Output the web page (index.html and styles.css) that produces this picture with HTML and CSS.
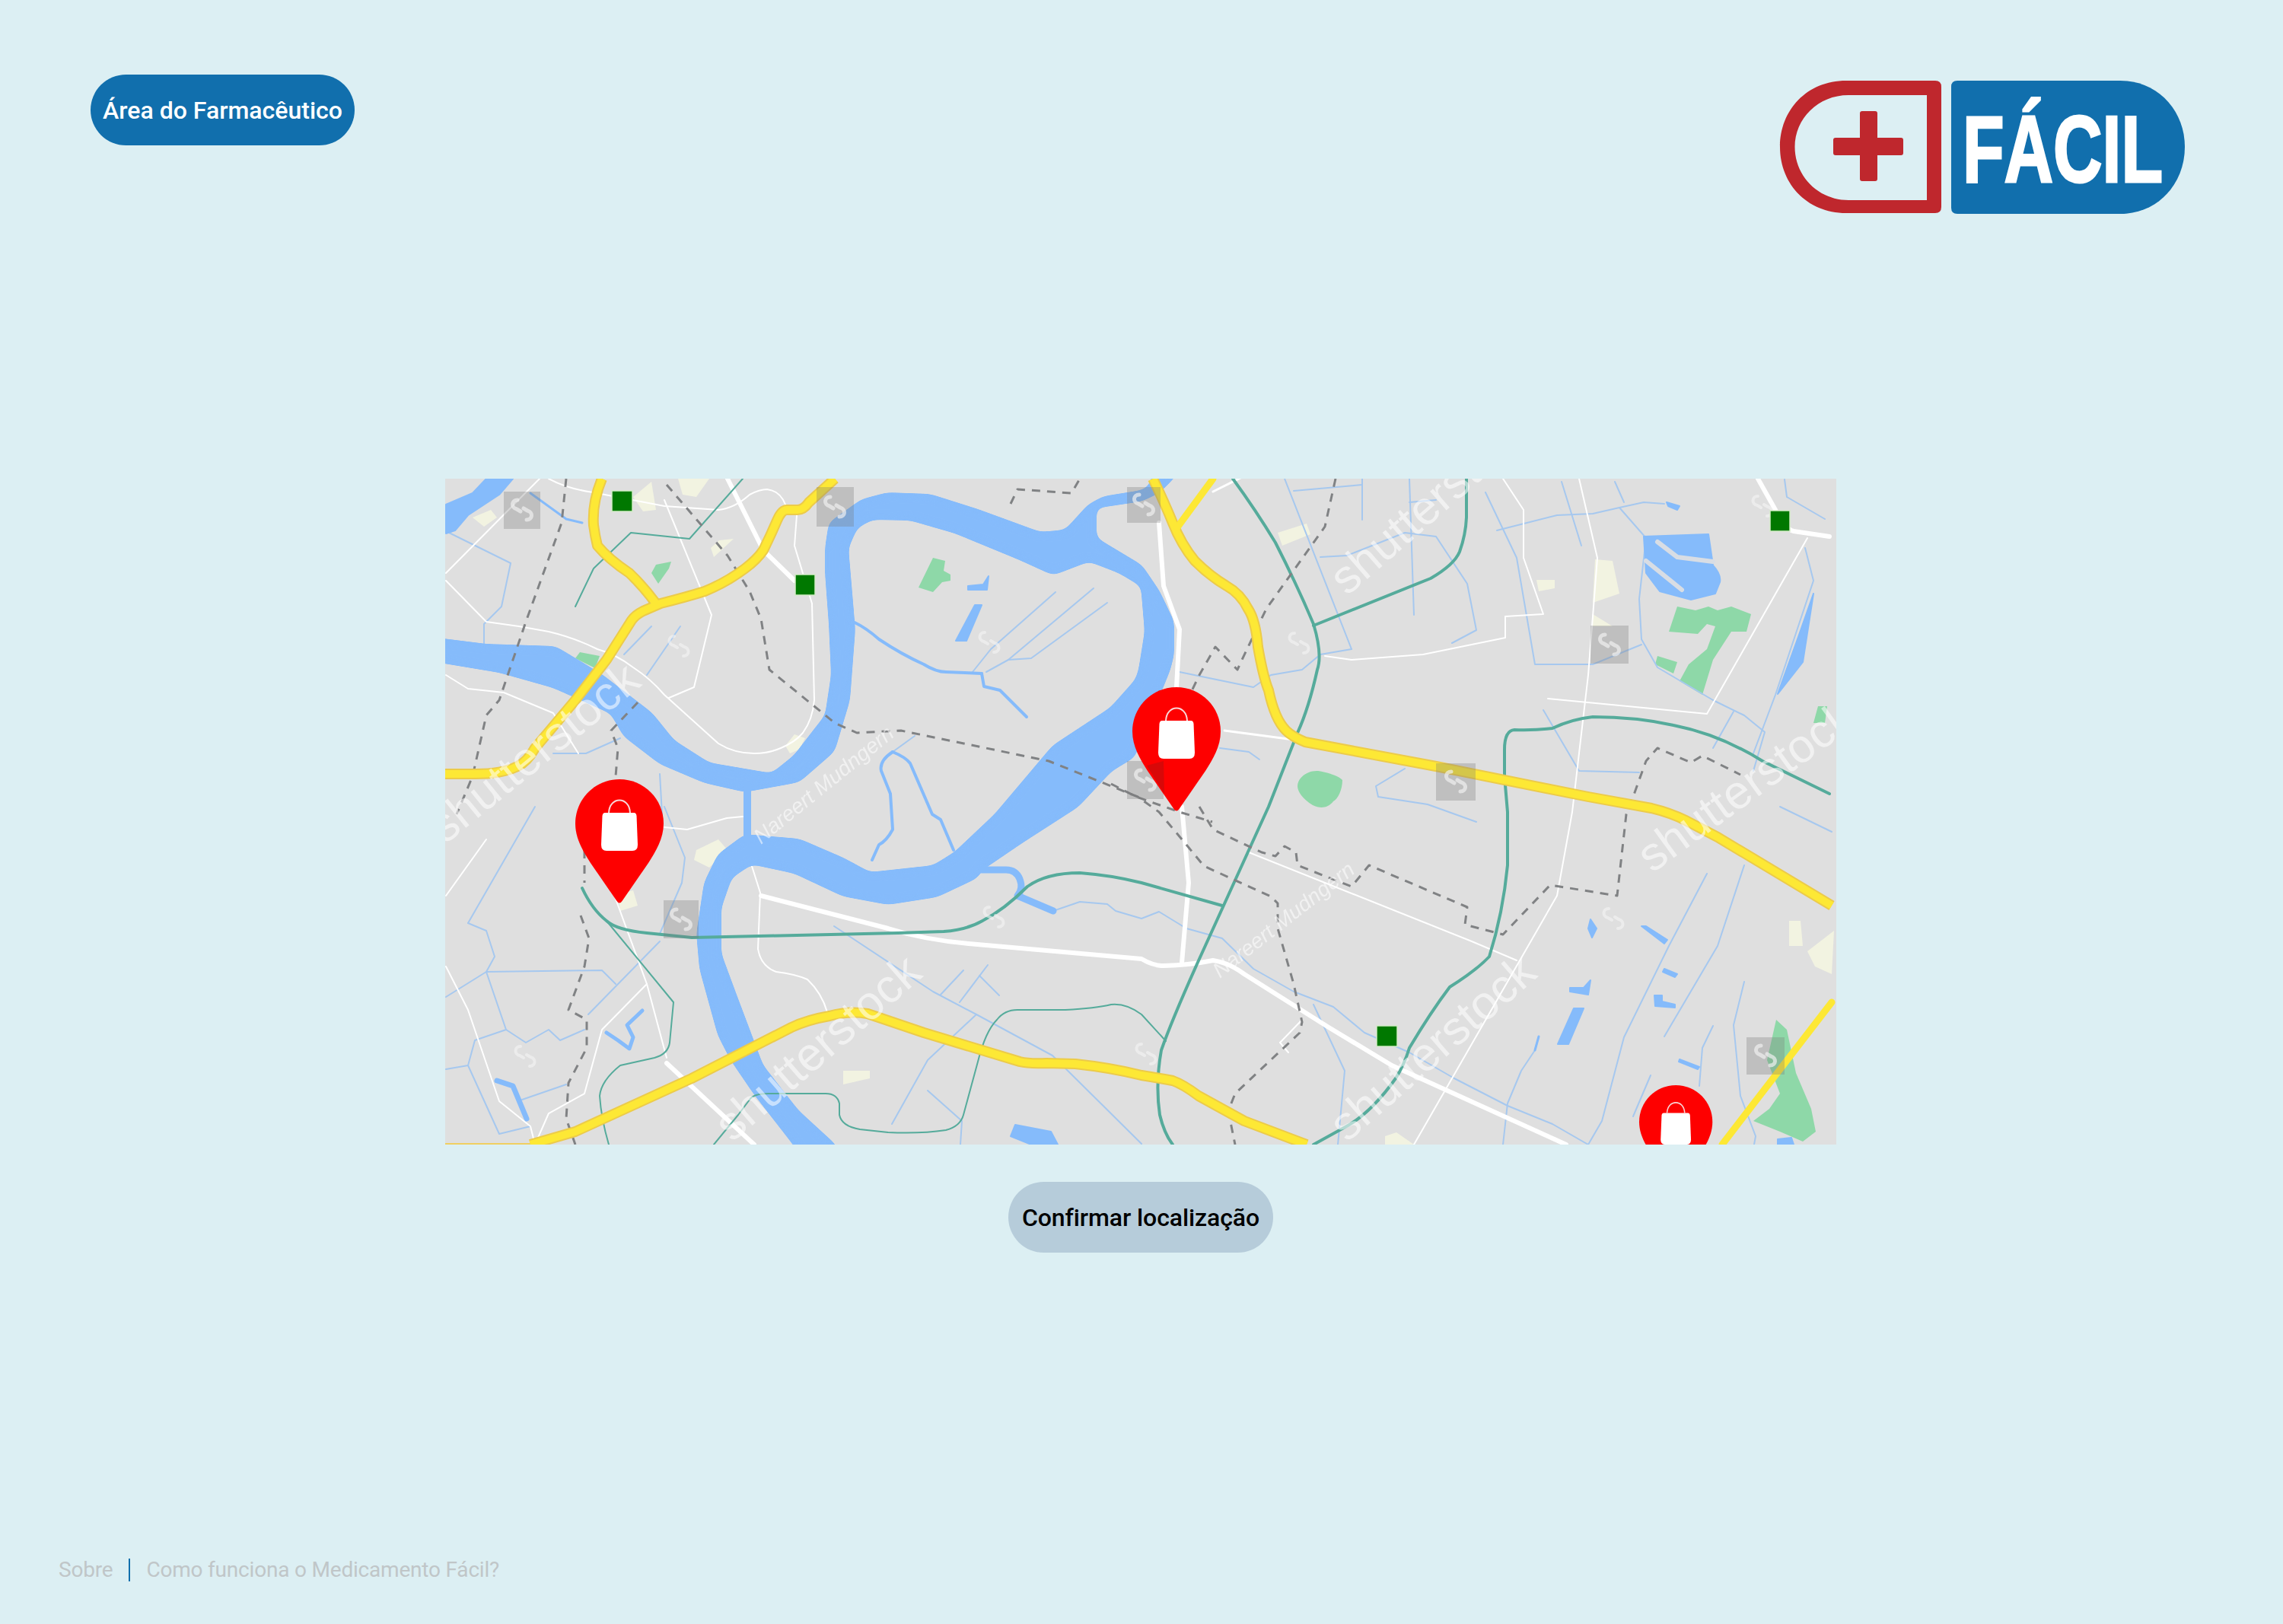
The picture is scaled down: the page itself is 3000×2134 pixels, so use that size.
FILE: index.html
```html
<!DOCTYPE html>
<html lang="pt-BR">
<head>
<meta charset="utf-8">
<title>Medicamento Fácil</title>
<link rel="stylesheet" href="styles.css">
</head>
<body>
<div class="page">
  <header class="header">
    <a class="pill pill-primary" href="#">Área do Farmacêutico</a>
    <svg class="logo" viewBox="0 0 532 175" aria-label="+ Fácil">
      <path class="logo-red" fill-rule="evenodd" d="M87 0H204Q212 0 212 8V166Q212 174 204 174H87C35 174 0 135 0 87C0 39 35 0 87 0ZM193 19V157H90C50 157 19.5 125 19.5 87C19.5 50 50 19 90 19Z"/>
      <path class="logo-red" d="M105 43Q105 40 108 40H125Q128 40 128 43V75H159Q162 75 162 78V95Q162 98 159 98H128V129Q128 132 125 132H108Q105 132 105 129V98H73Q70 98 70 95V78Q70 75 73 75H105Z"/>
      <path class="logo-blue" d="M233 0H447C497 0 532 40 532 87C532 135 497 175 447 175H233Q225 175 225 167V8Q225 0 233 0Z"/>
      <text class="logo-text" x="240" y="133" textLength="263" lengthAdjust="spacingAndGlyphs">FÁCIL</text>
    </svg>
  </header>

  <main class="main">
    <svg class="map" viewBox="585 629 1828 875" role="img" aria-label="Mapa com farmácias">
      <defs>
        <filter id="soft" x="-5%" y="-5%" width="110%" height="110%" color-interpolation-filters="sRGB">
          <feGaussianBlur stdDeviation="6"/>
          <feColorMatrix values="1 0 0 0 0 0 1 0 0 0 0 0 1 0 0 0 0 0 20 -9.500"/>
        </filter>
        <path id="ws" d="M-6 -13C-14 -13 -15 -3 -7 -1M6 13C14 13 15 3 7 1M-7 -1L-2 2M7 1L2 -2"/>
        <g id="pin">
          <path class="pin-red" d="M58 0C90 0 116 26 116 58C116 78 106 94 96 110L61.500 160Q58 165 54.500 160L20 110C10 94 0 78 0 58C0 26 26 0 58 0Z"/>
          <path class="pin-bag" d="M39 44H77Q80 44 80.500 48L82 86Q82 94 75 94H41Q34 94 34 86L35.500 48Q36 44 39 44Z"/>
          <path class="pin-handle" d="M44 44C45 22 71 22 72 44"/>
        </g>
        <g id="roads">
          <path d="M585 1017H625Q660 1017 680 1007Q693 1001 703 983L756 920L797 867L830 815Q835 808 845 803L868 793Q900 785 926 777Q955 765 979 747Q995 735 1003 723Q1012 705 1021 684Q1027 670 1034 670H1048Q1056 670 1063 660L1097 629"/>
          <path d="M791 629Q778 660 780 690Q782 705 785 717Q800 735 827 753Q845 770 862 793"/>
          <path d="M1515 629Q1530 660 1541 687Q1552 715 1570 737Q1590 757 1612 770Q1630 780 1640 800Q1650 815 1653 850Q1660 890 1667 907Q1675 945 1690 960Q1698 968 1715 975L1887 1007L2087 1047L2170 1062Q2195 1068 2215 1078L2257 1100L2407 1190"/>
          <path d="M697 1504L756 1487L909 1417L1040 1350Q1061 1340 1090 1335Q1115 1328 1140 1332L1214 1357L1340 1395Q1352 1398 1375 1397L1413 1398Q1460 1403 1500 1413Q1525 1417 1541 1420Q1555 1425 1575 1440L1635 1473L1717 1504"/>
        </g>
      </defs>

      <rect class="land" x="585" y="629" width="1828" height="875"/>

      <g class="cream">
        <polygon points="832,653 856,633 862,670 845,672"/>
        <polygon points="891,629 932,629 915,653 897,650"/>
        <polygon points="621,680 645,670 653,680 636,692"/>
        <polygon points="964,708 938,732 934,720 945,710"/>
        <polygon points="1044,965 1058,970 1050,985 1038,990 1032,980"/>
        <polygon points="915,1117 944,1103 956,1117 932,1140 912,1130"/>
        <polygon points="832,1170 838,1190 815,1197 812,1175"/>
        <polygon points="1108,1407 1143,1407 1143,1417 1108,1425"/>
        <polygon points="1679,700 1717,688 1722,702 1685,717"/>
        <polygon points="2019,762 2043,762 2043,773 2022,777"/>
        <polygon points="2096,735 2119,737 2128,780 2093,792"/>
        <polygon points="2093,807 2119,823 2093,823"/>
        <polygon points="2351,1210 2366,1210 2369,1243 2351,1243"/>
        <polygon points="2375,1250 2410,1223 2407,1280 2385,1270"/>
        <polygon points="1820,1493 1835,1488 1858,1504 1820,1504"/>
      </g>

      <g class="green">
        <polygon points="1226,733 1242,737 1240,750 1249,755 1249,763 1238,765 1226,778 1207,772"/>
        <polygon points="882,738 862,742 856,753 865,767 879,747"/>
        <polygon points="762,857 788,862 782,878 756,865"/>
        <path d="M1732 1013C1745 1015 1760 1020 1764 1025C1764 1038 1758 1050 1752 1053C1745 1062 1735 1063 1725 1058C1712 1050 1705 1040 1705 1033C1705 1022 1718 1012 1732 1013Z"/>
        <polygon points="2204,797 2228,802 2245,797 2257,802 2275,797 2301,807 2295,830 2275,830 2251,867 2237,913 2207,895 2219,873 2243,853 2254,823 2243,820 2231,833 2193,830"/>
        <polygon points="2178,862 2204,870 2199,885 2175,873"/>
        <polygon points="2389,928 2401,928 2398,950 2383,950"/>
        <polygon points="2334,1340 2348,1353 2360,1410 2380,1457 2386,1487 2369,1500 2339,1487 2304,1473 2325,1457 2339,1437 2322,1393"/>
      </g>

      <g class="thin-blue">
        <polyline points="586,698 671,740 659,797 636,820 636,847"/>
        <polyline points="856,823 820,860"/>
        <polyline points="894,823 850,887"/>
        <polyline points="1278,883 1302,853 1387,778"/>
        <polyline points="1296,883 1325,867 1437,773"/>
        <polyline points="1325,867 1355,865 1455,792"/>
        <polyline points="1202,967 1173,988"/>
        <polyline points="727,990 770,990 815,970"/>
        <polyline points="873,1060 900,1127 896,1160 867,1227"/>
        <polyline points="867,1017 870,1070"/>
        <polyline points="867,1237 773,1333"/>
        <polyline points="586,1310 639,1277 791,1275 809,1293"/>
        <polyline points="615,1213 639,1223 650,1257 639,1277 665,1353 624,1367 615,1400 586,1405"/>
        <polyline points="665,1353 691,1370 721,1353 736,1367 768,1353"/>
        <polyline points="686,1445 744,1425"/>
        <polyline points="615,1400 656,1490 697,1480"/>
        <polyline points="615,1213 703,1060"/>
        <polyline points="1096,1217 1226,1303 1283,1333 1383,1387 1500,1503"/>
        <polyline points="1172,1477 1219,1393 1283,1333"/>
        <polyline points="1261,1317 1298,1268"/>
        <polyline points="1236,1307 1266,1275"/>
        <polyline points="1287,1282 1313,1308"/>
        <polyline points="1219,1433 1264,1473 1262,1504"/>
        <polyline points="1384,1197 1419,1185 1455,1188 1466,1197 1500,1207 1523,1198 1559,1220 1606,1233 1647,1273 1700,1303 1752,1323 1793,1357 1852,1383 1911,1417 1981,1453 2040,1477 2087,1504"/>
        <polyline points="1688,629 1776,853"/>
        <polyline points="1852,629 1858,808"/>
        <polyline points="1700,645 1790,637"/>
        <polyline points="1790,629 1790,683"/>
        <polyline points="1735,732 1770,730 1846,700 1887,705 1928,767 1940,828 1908,845"/>
        <polyline points="1852,660 1887,657"/>
        <polyline points="1952,647 1993,733 2017,873 2093,873 2157,847"/>
        <polyline points="1967,697 2046,677 2093,675 2128,667 2160,660 2187,662"/>
        <polyline points="2122,633 2134,660"/>
        <polyline points="2128,667 2163,707 2154,787 2157,840 2178,877 2251,920 2292,940 2319,962 2304,1013"/>
        <polyline points="2052,633 2078,717"/>
        <polyline points="2278,935 2251,983"/>
        <polyline points="2372,720 2383,763 2333,913 2304,990"/>
        <polyline points="2345,630 2348,653 2398,682"/>
        <polyline points="1603,983 1641,988 1655,998"/>
        <polyline points="1550,883 1647,903 1670,887 1711,880 1735,860 1776,853"/>
        <polyline points="2028,933 2075,1013 2154,1015"/>
        <polyline points="1846,1010 1808,1033 1811,1047 1876,1057 1940,1080"/>
        <polyline points="2339,1060 2407,1093"/>
        <polyline points="2243,1148 2193,1243 2134,1363 2105,1473 2087,1504"/>
        <polyline points="2292,1137 2257,1243 2187,1362"/>
        <polyline points="2292,1290 2278,1347 2287,1440 2307,1493 2305,1504"/>
        <polyline points="2251,1348 2237,1377 2233,1427"/>
        <polyline points="2169,1413 2146,1467"/>
        <polyline points="2022,1362 2017,1380 1999,1407 1981,1450 1975,1504"/>
        <polyline points="1726,1320 1767,1407 1758,1504"/>
      </g>

      <g class="thin-white">
        <polyline points="586,753 709,629"/>
        <path d="M586 763L639 817Q680 822 721 830Q755 838 785 853Q810 860 832 877Q855 892 873 913L944 977Q965 990 991 990Q1010 990 1026 983Q1045 975 1055 963Q1068 945 1070 920L1067 793L1044 717L1047 677"/>
        <polyline points="586,887 615,905 662,910 727,937 760,990"/>
        <polyline points="879,917 912,903 935,808 873,657"/>
        <path d="M721 629Q745 642 779 647L873 665L944 670Q965 668 985 650Q998 643 1008 643Q1025 645 1032 663"/>
        <polyline points="1975,629 2002,670 2002,733 2028,807 1978,810 1978,838 1870,860 1776,867 1741,862"/>
        <polyline points="2075,629 2099,733 2087,887 2066,1067 2046,1177 1858,1504"/>
        <polyline points="2034,918 2243,938 2375,707"/>
        <polyline points="1641,1120 1934,1237 1993,1262"/>
        <polyline points="1682,1370 1711,1340"/>
        <polyline points="1682,1370 1693,1383"/>
        <polyline points="639,1103 586,1177"/>
        <polyline points="586,1270 615,1327 656,1447 697,1480 703,1504"/>
        <polyline points="873,1087 903,1090 955,1075 976,1073"/>
        <polyline points="806,1173 850,1293 876,1390"/>
        <polyline points="850,1293 791,1353 768,1437 721,1463 703,1504"/>
        <path d="M987 1135L999 1173L996 1247Q1000 1270 1020 1277Q1045 1280 1061 1287Q1080 1305 1087 1330"/>
      </g>

      <g class="water water-main">
        <polygon points="560,837 639,847 730,850 791,887 856,937 885,973 932,1003 1014,1017 1044,993 1067,963 1085,940 1093,887 1090,820 1085,753 1085,720 1090,687 1132,657 1166,648 1222,650 1285,670 1367,700 1400,697 1431,663 1450,653 1500,645 1510,640 1520,610 1555,610 1541,629 1523,647 1500,658 1440,667 1440,707 1500,743 1523,777 1542,817 1542,860 1537,880 1490,995 1460,1013 1416,1060 1343,1107 1290,1143 1284,1153 1231,1178 1167,1188 1108,1177 1044,1147 988,1135 961,1153 947,1193 947,1253 967,1307 1002,1400 1049,1460 1097,1504 1110,1530 1060,1530 1043,1504 991,1437 961,1393 944,1360 920,1273 916,1227 926,1160 944,1123 979,1097 1050,1103 1108,1128 1143,1147 1226,1138 1255,1120 1308,1070 1384,980 1460,930 1493,893 1497,880 1505,830 1500,770 1470,752 1431,737 1384,755 1340,735 1255,700 1196,683 1146,682 1126,693 1114,720 1123,827 1116,920 1096,987 1050,1027 979,1040 926,1028 867,1003 820,967 803,937 727,903 656,883 560,867"/>
      </g>
      <g class="water">
        <rect x="978" y="1030" width="8" height="75"/>
        <polygon points="586,663 621,648 639,629 674,629 656,650 615,677 598,697 586,701"/>
        <polygon points="1281,795 1290,795 1270,842 1256,842"/>
        <polygon points="1299,757 1297,775 1272,775 1272,770 1292,768"/>
        <polygon points="1334,1478 1381,1487 1390,1504 1355,1504 1328,1493"/>
        <path d="M2160 705L2245 702L2251 743Q2262 755 2260 765L2254 780L2222 788L2181 777L2163 753Z"/>
        <polygon points="2383,780 2369,870 2336,912 2345,887 2363,837"/>
        <polygon points="2190,660 2207,665 2204,670 2192,665"/>
        <polygon points="2090,1208 2098,1220 2092,1232 2087,1220"/>
        <polygon points="2157,1217 2163,1217 2191,1235 2187,1240"/>
        <polygon points="2187,1273 2204,1280 2201,1284 2185,1277"/>
        <polygon points="2090,1288 2087,1307 2063,1303 2063,1298 2081,1298"/>
        <polygon points="2174,1308 2184,1308 2184,1316 2201,1320 2201,1324 2175,1322"/>
        <polygon points="2068,1325 2081,1325 2061,1372 2047,1372"/>
        <polygon points="2207,1392 2233,1402 2231,1405 2206,1395"/>
        <polygon points="2336,1497 2354,1495 2357,1504 2336,1504"/>
      </g>
      <g class="water-line">
        <polyline class="w2" points="697,648 744,682 765,687"/>
        <path class="w3" d="M1123 818Q1138 825 1155 840Q1185 860 1214 873Q1230 883 1243 883L1290 885"/>
        <polyline class="w3" points="1290,885 1293,902 1314,907 1349,942"/>
        <path class="w3" d="M1173 988Q1155 1000 1158 1013L1170 1043L1173 1090Q1165 1105 1155 1110L1146 1130"/>
        <path class="w3" d="M1173 988Q1190 995 1196 1003L1225 1070L1236 1077L1253 1117"/>
        <path class="w8" d="M1290 1143H1322Q1335 1143 1340 1155Q1345 1168 1337 1177L1384 1197"/>
        <polyline class="w4" points="844,1328 824,1347 832,1363 827,1378 812,1367 797,1357"/>
        <polyline class="w6" points="653,1420 674,1427 692,1470"/>
        <polyline class="w2" points="2022,1362 2017,1380"/>
      </g>
      <g class="lake-lines">
        <polyline points="2178,712 2204,732 2251,738"/>
        <polyline points="2163,737 2210,775"/>
      </g>

      <g class="major-white">
        <polyline points="956,629 1003,723 1044,763"/>
        <path d="M1000 1177L1167 1220Q1215 1235 1273 1240L1500 1260Q1515 1269 1529 1269Q1565 1268 1594 1262Q1615 1265 1635 1280L1746 1350L1829 1400L2058 1504"/>
        <polyline points="1523,687 1529,770 1550,827 1546,903"/>
        <polyline points="1553,1060 1562,1160 1553,1265"/>
        <polyline points="876,1397 991,1504"/>
        <path d="M2310 629L2333 670Q2345 695 2357 698L2404 705"/>
        <polyline class="mw-thin" points="1609,960 1700,972"/>
        <polyline class="mw-thin" points="1594,646 1642,622"/>
      </g>

      <g class="teal">
        <path d="M1620 629Q1650 670 1676 713Q1705 770 1726 820Q1738 860 1731 880Q1720 930 1705 963L1667 1060L1576 1260Q1540 1340 1526 1380Q1518 1425 1524 1465Q1530 1490 1541 1504"/>
        <path d="M1726 822L1880 760Q1911 742 1918 725Q1926 703 1927 680V629"/>
        <path d="M2404 1043L2316 1000Q2260 965 2199 953Q2150 942 2093 942Q2065 945 2040 957Q2015 960 1990 959Q1977 960 1977 985V1020L1981 1067V1137Q1975 1200 1957 1257Q1940 1275 1905 1297Q1880 1330 1852 1377Q1845 1400 1834 1417Q1800 1465 1764 1483L1726 1504"/>
        <path d="M765 1167Q778 1195 797 1210Q810 1222 850 1226L909 1232L1180 1226L1240 1224Q1270 1222 1291 1210Q1320 1195 1350 1165Q1375 1147 1419 1147Q1460 1150 1500 1160L1606 1190"/>
      </g>
      <g class="teal-thin">
        <path d="M797 1210L885 1317L880 1370Q878 1385 860 1390L815 1400Q790 1420 788 1440Q790 1470 800 1504"/>
        <path d="M938 1504L970 1465L985 1445Q990 1437 1010 1437H1085Q1100 1437 1103 1450V1465Q1106 1480 1130 1484L1167 1488Q1210 1490 1243 1485Q1262 1480 1266 1465L1285 1395Q1295 1355 1310 1340Q1320 1327 1337 1327L1400 1327Q1440 1325 1460 1320Q1480 1318 1500 1333L1532 1368"/>
        <polyline points="976,629 906,708 829,700 780,747 756,797"/>
      </g>

      <g class="dash">
        <polyline points="744,629 738,687 691,817 656,920 639,940 621,1020 600,1070"/>
        <polyline points="876,637 956,730 985,777 1000,813 1011,880 1097,950 1126,963 1184,960 1378,1000 1495,1047 1523,1067 1559,1110 1582,1138 1670,1178 1679,1187 1679,1220 1700,1293 1711,1343 1708,1357 1623,1437 1614,1460 1623,1504"/>
        <polyline points="1576,1060 1594,1090 1658,1120 1676,1125 1688,1112 1703,1120 1705,1137 1776,1165 1799,1137 1928,1192 1925,1215 1975,1228 2037,1163 2125,1177 2137,1070 2146,1047 2163,1000 2178,983 2222,1002 2237,993 2287,1018"/>
        <polyline points="1755,629 1741,692 1664,800 1632,867 1626,880 1597,850 1576,887 1565,910"/>
        <polyline points="1328,662 1337,643 1408,648 1419,629"/>
        <polyline points="838,923 803,960 812,983 809,1020"/>
        <polyline points="768,1117 768,1160"/>
        <polyline points="763,1203 774,1233 768,1270 747,1327 771,1340 771,1377 747,1423 744,1470 756,1504"/>
        <polyline points="1460,1030 1493,1047 1550,1067 1593,1080"/>
      </g>

      <use class="road-case" href="#roads"/>
      <use class="road-fill" href="#roads"/>
      <g class="road-thin">
        <polyline points="1594,629 1547,693"/>
        <polyline points="2407,1317 2263,1504"/>
      </g>
      <rect class="edge-line" x="585" y="1502" width="112" height="2"/>

      <g class="wm-box">
        <rect x="662" y="646" width="48" height="49"/>
        <rect x="1073" y="640" width="49" height="52"/>
        <rect x="1481" y="640" width="44" height="47"/>
        <rect x="1481" y="1000" width="48" height="50"/>
        <rect x="872" y="1183" width="46" height="50"/>
        <rect x="2090" y="822" width="50" height="50"/>
        <rect x="1887" y="1003" width="52" height="49"/>
        <rect x="2295" y="1363" width="50" height="49"/>
      </g>
      <g class="wm-glyph">
        <use href="#ws" x="686" y="670"/><use href="#ws" x="1097" y="666"/><use href="#ws" x="1503" y="663"/>
        <use href="#ws" x="1505" y="1025"/><use href="#ws" x="895" y="1208"/><use href="#ws" x="2115" y="847"/>
        <use href="#ws" x="1913" y="1027"/><use href="#ws" x="2320" y="1387"/>
      </g>
      <g class="wm-outline">
        <use href="#ws" x="1707" y="845"/><use href="#ws" x="892" y="849"/><use href="#ws" x="1300" y="844"/>
        <use href="#ws" x="690" y="1388"/><use href="#ws" x="1306" y="1205"/><use href="#ws" x="2120" y="1207"/>
        <use href="#ws" x="1506" y="1385"/><use href="#ws" x="2316" y="665"/>
      </g>
      <g class="wm-text">
        <text transform="translate(585 1110) rotate(-39)">shutterstock</text>
        <text transform="translate(962 1502) rotate(-41)">shutterstock</text>
        <text transform="translate(1770 1502) rotate(-41)">shutterstock</text>
        <text transform="translate(1770 784) rotate(-41)">shutterstock</text>
        <text transform="translate(2171 1148) rotate(-36)">shutterstock</text>
        <text transform="translate(270 1700) rotate(-41)">shutterstock</text>
      </g>
      <g class="wm-small">
        <text transform="translate(1000 1110) rotate(-39)">Nareert Mudngern</text>
        <text transform="translate(1603 1286) rotate(-38)">Nareert Mudngern</text>
      </g>

      <g class="poi">
        <rect x="804" y="645" width="27" height="27"/>
        <rect x="1045" y="755" width="26" height="27"/>
        <rect x="2326" y="671" width="26" height="27"/>
        <rect x="1809" y="1348" width="27" height="27"/>
      </g>

      <use href="#pin" transform="translate(756 1024)"/>
      <use href="#pin" transform="translate(1488 903)"/>
      <polygon class="pin-shade" points="1529,1000 1507,1006 1530,1043"/>
      <use href="#pin" transform="translate(2154 1426) scale(.83)"/>
    </svg>
    <a class="pill pill-confirm" href="#">Confirmar localização</a>
  </main>

  <footer class="footer">
    <a class="foot-link" href="#">Sobre</a>
    <span class="foot-sep"></span>
    <a class="foot-link" href="#">Como funciona o Medicamento Fácil?</a>
  </footer>
</div>
</body>
</html>
```
FILE: styles.css
```css
* { box-sizing: border-box; }
html, body { margin: 0; padding: 0; }
body { background: #dceff3; font-family: Roboto, "Liberation Sans", sans-serif; }
a { text-decoration: none; }

.page { display: flex; flex-direction: column; width: 3000px; min-height: 2134px; }

.header { display: flex; justify-content: space-between; align-items: flex-start; padding: 98px 129px 0 119px; }

.pill { display: flex; align-items: center; justify-content: center; height: 93px; border-radius: 47px; font-size: 32px; font-weight: 500; white-space: nowrap; }
.pill-primary { width: 347px; background: #116fad; color: #fff; }
.pill-confirm { width: 348px; margin: 49px 2px 0 0; background: #b6ccda; color: #000; letter-spacing: -.1px; }

.logo { display: block; width: 532px; height: 175px; margin-top: 8px; overflow: visible; }
.logo-red { fill: #bf272d; }
.logo-blue { fill: #116fad; }
.logo-text { fill: #fff; stroke: #fff; stroke-width: 3px; font-family: "Liberation Sans Narrow", "Liberation Sans", sans-serif; font-weight: 700; font-size: 124px; }

.main { display: flex; flex-direction: column; align-items: center; margin-top: 348px; }

.map { display: block; width: 1828px; height: 875px; margin-right: 2px; filter: blur(.6px); }
.map polyline,
.thin-white path, .water-line path, .major-white path, .teal path, .teal-thin path { fill: none; stroke-linejoin: round; stroke-linecap: round; }
.land { fill: #dfdfdf; }
.cream polygon { fill: #f2f3e1; }
.green path, .green polygon { fill: #8ed8a8; }
.thin-blue polyline { stroke: #a6c8ef; stroke-width: 2px; }
.thin-white polyline, .thin-white path { stroke: #fff; stroke-width: 2px; }
.water polygon, .water path, .water rect { fill: #85bbfb; stroke: #85bbfb; stroke-width: 2px; stroke-linejoin: round; }
.water-main { filter: url(#soft); }
.water-line polyline, .water-line path { stroke: #85bbfb; }
.w2 { stroke-width: 3px; }
.w3 { stroke-width: 4px; }
.w4 { stroke-width: 5px; }
.w6 { stroke-width: 7px; }
.w8 { stroke-width: 9px; }
.lake-lines polyline { stroke: #d8dde4; stroke-width: 6px; }
.major-white polyline, .major-white path { stroke: #fff; stroke-width: 6px; }
.major-white .mw-thin { stroke-width: 3px; }
.teal path { stroke: #55ab9b; stroke-width: 4px; }
.teal-thin path, .teal-thin polyline { stroke: #55ab9b; stroke-width: 2px; }
.dash polyline { stroke: #808284; stroke-width: 3px; stroke-dasharray: 11 9; stroke-linecap: butt; }
.road-case { fill: none; stroke: #eccb4a; stroke-width: 14px; stroke-linejoin: round; }
.road-fill { fill: none; stroke: #fde835; stroke-width: 10px; stroke-linejoin: round; }
.road-thin polyline { stroke: #fde835; stroke-width: 9px; }
.edge-line { fill: #f0cf60; }
.wm-box rect { fill: rgba(120, 120, 120, .3); }
.wm-glyph use { fill: none; stroke: rgba(240, 240, 240, .7); stroke-width: 5px; stroke-linecap: round; }
.wm-outline use { fill: none; stroke: rgba(245, 245, 245, .6); stroke-width: 4px; stroke-linecap: round; }
.wm-text text { fill: rgba(255, 255, 255, .55); font-family: "Liberation Sans", sans-serif; font-size: 62px; }
.wm-small text { fill: rgba(255, 255, 255, .55); font-family: "Liberation Sans", sans-serif; font-size: 28px; font-style: italic; }
.poi rect { fill: #007800; stroke: #d4ecc8; stroke-width: 1.500px; }
.pin-red { fill: #fe0000; }
.pin-bag { fill: #fff; }
.pin-handle { fill: none; stroke: #f9d6d6; stroke-width: 2px; }
.pin-shade { fill: #d80808; }

.footer { display: flex; align-items: center; gap: 21px; margin-top: auto; padding: 0 0 56px 77px; height: 86px; }
.foot-link { font-size: 28px; line-height: 30px; color: #c0c6c8; letter-spacing: -.2px; }
.foot-sep { width: 2px; height: 30px; background: #116fad; }
```
